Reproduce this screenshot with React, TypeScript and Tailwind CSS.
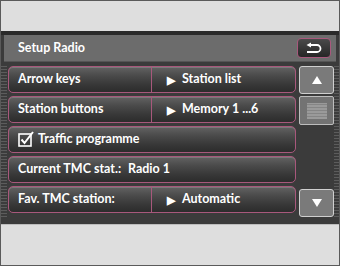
// Setup Radio screen
import React from 'react';

// Row cell shared look
const rowClass =
  'flex h-[27px] rounded-[5px] border border-[#a8587c] bg-[linear-gradient(180deg,#626262_0%,#4a4a4a_35%,#383838_70%,#2c2c2c_100%)] shadow-[inset_0_1px_0_#7a7a7a] text-white text-[12.5px] font-bold items-center';

const Arrow = () => <span className="mr-[7px] text-[11px] leading-none">▶</span>;

const stripes =
  'bg-[repeating-linear-gradient(0deg,#5c5c5c_0px,#5c5c5c_1px,#3c3c3c_1px,#3c3c3c_3px)]';

const App = () => {
  return (
    <div
      className="w-[340px] h-[266px] bg-[#dedede] border border-[#5a5a5a] flex flex-col overflow-hidden"
      style={{ fontFamily: 'Lato, "Open Sans", sans-serif' }}
    >
      {/* Top blank */}
      <div className="h-[30px] shrink-0" />

      {/* Screen */}
      <div className="h-[193px] shrink-0 bg-[#3b3b3b] border-t-[4px] border-[#2a2a2a] flex flex-col">
        {/* Header */}
        <div className="mx-[3px] h-[27px] bg-[#6c6c6c] border-b border-[#555] flex items-center justify-between pl-[14px] pr-[5px]">
          <span className="text-white text-[12.5px] font-bold">Setup Radio</span>
          <div className="w-[34px] h-[20px] rounded-[4px] border border-[#a8587c] bg-[linear-gradient(180deg,#4a4a4a,#262626)] flex items-center justify-center">
            <svg width="18" height="12" viewBox="0 0 18 12" fill="none">
              <path d="M5 3 H12 A3.5 3.5 0 0 1 12 10 H2" stroke="white" strokeWidth="1.8" />
              <path d="M1.5 3 L6 0.5 L6 5.5 Z" fill="white" />
            </svg>
          </div>
        </div>

        {/* Body */}
        <div className="flex flex-1 pt-[4px] pb-[7px]">
          <div className={`w-[6px] ${stripes}`} />
          <div className="flex flex-col gap-[3px] w-[289px] pl-[1px]">
            <div className={rowClass}>
              <div className="w-[143px] h-full flex items-center pl-[9px] border-r border-[#a8587c]">Arrow keys</div>
              <div className="flex-1 flex items-center pl-[15px]"><Arrow />Station list</div>
            </div>
            <div className={rowClass}>
              <div className="w-[143px] h-full flex items-center pl-[9px] border-r border-[#a8587c]">Station buttons</div>
              <div className="flex-1 flex items-center pl-[15px]"><Arrow />Memory 1 ...6</div>
            </div>
            <div className={rowClass}>
              <div className="flex items-center pl-[9px]">
                <svg width="17" height="16" viewBox="0 0 17 16" className="mr-[3px] -mt-[2px]">
                  <rect x="1" y="3" width="12" height="12" fill="none" stroke="white" strokeWidth="1.6" />
                  <path d="M3.5 8.5 L6.5 12 L15 1" fill="none" stroke="white" strokeWidth="2" />
                </svg>
                Traffic programme
              </div>
            </div>
            <div className={rowClass}>
              <div className="pl-[9px] flex items-center">
                <span className="w-[110px] shrink-0">Current TMC stat.:</span>
                <span>Radio 1</span>
              </div>
            </div>
            <div className={rowClass}>
              <div className="w-[143px] h-full flex items-center pl-[9px] border-r border-[#a8587c]">Fav. TMC station:</div>
              <div className="flex-1 flex items-center pl-[15px]"><Arrow />Automatic</div>
            </div>
          </div>

          {/* Scroll bar */}
          <div className="w-[35px] ml-[3px] flex flex-col">
            <div className="h-[28px] rounded-[3px] border border-[#cfcfcf] bg-[#7a7a7a] flex items-center justify-center">
              <span className="w-0 h-0 border-l-[5px] border-r-[5px] border-b-[8px] border-l-transparent border-r-transparent border-b-white" />
            </div>
            <div className="h-[29px] mt-[2px] rounded-[2px] border border-[#bdbdbd] bg-[#737373] flex items-center justify-center">
              <div className="w-[20px] h-[16px] bg-[repeating-linear-gradient(0deg,#9a9a9a_0px,#9a9a9a_2px,#858585_2px,#858585_3px)]" />
            </div>
            <div className="flex-1" />
            <div className="h-[28px] rounded-[3px] border border-[#cfcfcf] bg-[#7a7a7a] flex items-center justify-center">
              <span className="w-0 h-0 border-l-[5px] border-r-[5px] border-t-[8px] border-l-transparent border-r-transparent border-t-white" />
            </div>
          </div>
          <div className={`flex-1 ${stripes}`} />
        </div>
      </div>

      {/* Bottom blank */}
      <div className="flex-1 border-t border-[#bdbdbd]" />
    </div>
  );
};

export default App;
